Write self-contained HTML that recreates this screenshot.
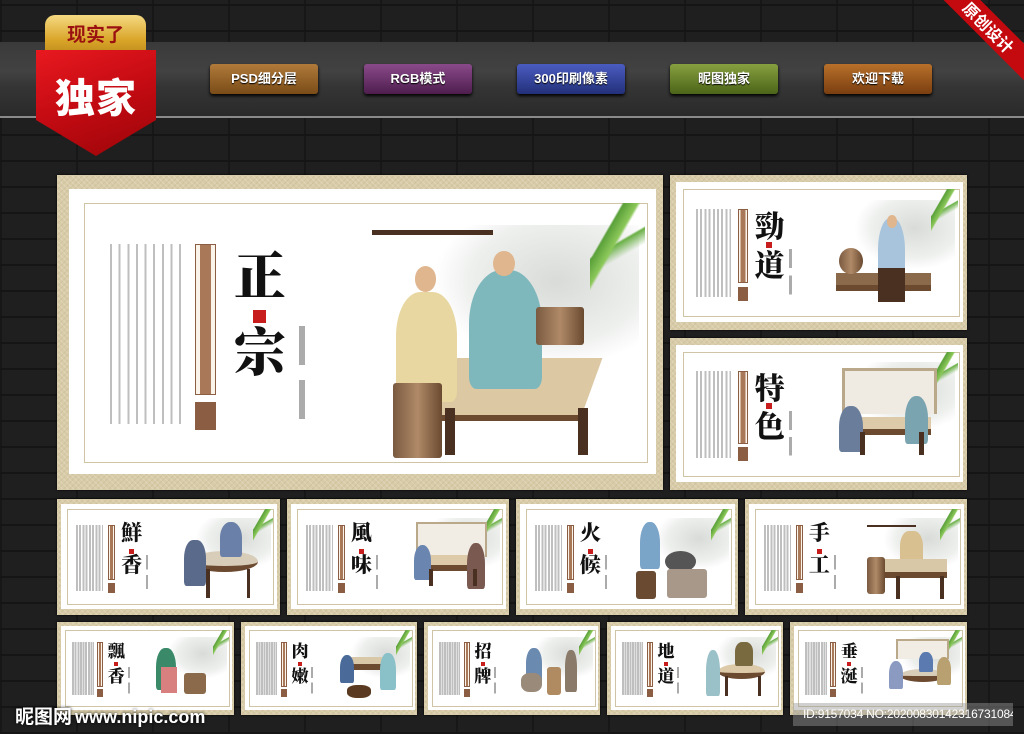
<!DOCTYPE html>
<html><head><meta charset="utf-8">
<style>
*{margin:0;padding:0;box-sizing:border-box}
body{width:1024px;height:734px;overflow:hidden;position:relative;font-family:"Liberation Sans","Noto Sans CJK SC",sans-serif;
background-color:#1f1f1f;
background-image:repeating-linear-gradient(0deg,#151515 0 2px,transparent 2px 26px),repeating-linear-gradient(90deg,#171717 0 2px,transparent 2px 76px);}
.band{position:absolute;left:0;top:42px;width:1024px;height:74px;background:linear-gradient(#3a3a3a,#424242 40%,#353535 60%,#2a2a2a);}
.band:after{content:"";position:absolute;left:0;bottom:-2px;width:100%;height:2px;background:#8a8a8a}
.btn{position:absolute;top:64px;height:30px;width:108px;border-radius:3px;color:#fff;font-weight:bold;font-size:13px;text-align:center;line-height:30px;box-shadow:0 2px 3px #000;text-shadow:0 1px 1px #000}
.gold{position:absolute;left:45px;top:15px;width:101px;height:42px;border-radius:10px 10px 0 0;background:linear-gradient(#f5d982,#d9a528 60%,#b9861a);color:#9a1010;font-weight:bold;font-size:19px;text-align:center;line-height:38px;font-family:"Noto Sans CJK SC",sans-serif}
.red{position:absolute;left:36px;top:50px;width:120px;height:106px;background:linear-gradient(160deg,#e8191f,#c30a12 50%,#9a0509);clip-path:polygon(0 0,100% 0,100% 66%,50% 100%,0 66%)}
.red span{position:absolute;left:0;top:16px;width:100%;text-align:center;color:#fff;font-weight:900;font-size:40px;font-family:"Noto Sans CJK SC",sans-serif;letter-spacing:1px}
.rib{position:absolute;right:-40px;top:14px;width:150px;height:26px;background:#c4090f;transform:rotate(45deg);color:#fff;font-weight:bold;font-size:16px;text-align:center;line-height:26px;font-family:"Noto Sans CJK SC",sans-serif}
.p{position:absolute;background:#d8cca8;background-image:repeating-linear-gradient(45deg,rgba(255,255,255,.18) 0 1px,transparent 1px 4px),repeating-linear-gradient(-45deg,rgba(150,130,90,.15) 0 1px,transparent 1px 4px);box-shadow:0 0 2px #000}
.w{position:absolute;left:2%;top:4.5%;right:1.2%;bottom:5%;background:#fff}
.ln{position:absolute;left:4.5%;top:9%;right:2.5%;bottom:8.5%;border:1px solid #cfc5a6}
.tx{position:absolute;left:8.7%;top:22%;width:12%;height:57%;background:repeating-linear-gradient(90deg,#8a8a8a 0 2px,transparent 2px 12%);opacity:.55}
.lb{position:absolute;left:22.8%;top:22%;width:3.4%;height:48%;border:1px solid #8b5e44;background:linear-gradient(90deg,#faf3ea 20%,#a87858 20% 80%,#faf3ea 80%)}
.lb2{position:absolute;left:22.8%;top:72%;width:3.4%;height:9%;background:#8b5e44}
.t{position:absolute;left:28.5%;width:10%;font-family:"Noto Serif CJK SC",serif;font-weight:900;color:#111;text-align:center;line-height:1}
.st{position:absolute;left:32.3%;top:43%;width:2.2%;height:4%;background:#c71d1d}
.sm{position:absolute;left:40%;top:48%;width:1%;height:31%;background:repeating-linear-gradient(#444 0 40%,transparent 40% 55%);opacity:.45}
.hill{position:absolute;left:62%;top:16%;width:34%;height:45%;background:radial-gradient(ellipse at 60% 40%,#d9dbd8,#eef0ee 50%,transparent 70%)}
.bam{position:absolute;right:3%;top:9%;width:9%;height:28%;background:linear-gradient(120deg,transparent 30%,#5aa03a 32%,#8cc85a 45%,transparent 48%),linear-gradient(150deg,transparent 45%,#6ab046 47%,transparent 60%)}
.tab{position:absolute;left:60%;top:58%;width:28%;height:20%;background:#ddc8a4;border-bottom:6px solid #6b4a30;transform:skewX(-20deg)}
.leg{position:absolute;top:74%;width:1.6%;height:15%;background:#4a3020}
.f1{position:absolute;left:56%;top:37%;width:10%;height:35%;background:#e8d7a0;border-radius:40% 40% 10% 10%}
.f2{position:absolute;left:68%;top:30%;width:12%;height:38%;background:#7fb8bc;border-radius:45% 45% 10% 10%}
.hd{position:absolute;width:3.5%;height:8%;border-radius:50%;background:#e0b68e}
.sv{position:absolute;left:55.5%;top:66%;width:8%;height:24%;background:linear-gradient(90deg,#7a5a40,#b08a68,#6a4a30);border-radius:3px}
.wm{position:absolute;left:15px;top:703px;color:#fff;font-weight:bold;font-size:19px;line-height:26px;text-shadow:0 0 3px #000;font-family:"Noto Sans CJK SC",sans-serif;white-space:nowrap}
.wm b{font-family:"Liberation Sans",sans-serif;font-size:18px;margin-left:3px}
.id{position:absolute;left:793px;top:703px;width:220px;height:23px;background:rgba(150,150,150,.45);color:#fff;font-size:12px;line-height:23px;padding-left:10px;white-space:nowrap;overflow:hidden;letter-spacing:-.2px}
</style></head><body>
<div class="band"></div>
<div class="gold">现实了</div>
<div class="red"><span>独家</span></div>
<div class="rib">原创设计</div>
<div class="btn" style="left:210px;background:linear-gradient(#b07a3a,#7a4c18)">PSD细分层</div>
<div class="btn" style="left:364px;background:linear-gradient(#8a4a8a,#4e1e4e)">RGB模式</div>
<div class="btn" style="left:517px;background:linear-gradient(#4a5cc0,#23307a)">300印刷像素</div>
<div class="btn" style="left:670px;background:linear-gradient(#86a040,#4c6418)">昵图独家</div>
<div class="btn" style="left:824px;background:linear-gradient(#b8702a,#7a3e10)">欢迎下载</div>

<div class="p" style="left:57px;top:175px;width:606px;height:315px">
<div class="w"></div><div class="ln"></div><div class="hill"></div><div class="bam"></div>
<div class="tx"></div><div class="lb"></div><div class="lb2"></div>
<div class="t" style="top:23%;font-size:52px">正</div><div class="st"></div>
<div class="t" style="top:47%;font-size:52px">宗</div><div class="sm"></div>
<div style="position:absolute;left:52%;top:17.5%;width:20%;height:1.5%;background:#4a3020"></div>
<div class="tab"></div><div class="leg" style="left:64%"></div><div class="leg" style="left:86%"></div>
<div class="f1"></div><div class="hd" style="left:59%;top:29%"></div>
<div class="f2"></div><div class="hd" style="left:72%;top:24%"></div>
<div class="sv"></div><div class="sv" style="left:79%;top:42%;height:12%"></div>
</div>

<div class="p" style="left:670px;top:175px;width:297px;height:155px">
<div class="w"></div><div class="ln"></div><div class="hill"></div><div class="bam"></div>
<div class="tx"></div><div class="lb"></div><div class="lb2"></div>
<div class="t" style="top:22%;font-size:30px">勁</div><div class="st"></div><div class="t" style="top:47%;font-size:30px">道</div><div class="sm"></div>
<div class="tab" style="top:63%;left:56%;width:32%;transform:none;height:12%;background:#8a6a4a"></div>
<div class="f2" style="left:70%;top:28%;height:45%;width:9%;background:#a8c4dc"></div><div class="hd" style="left:73%;top:26%"></div>
<div style="position:absolute;left:70%;top:60%;width:9%;height:22%;background:#4a3020"></div>
<div class="sv" style="left:57%;top:47%;width:8%;height:17%;border-radius:50%"></div>
</div>
<div class="p" style="left:670px;top:338px;width:297px;height:152px">
<div class="w"></div><div class="ln"></div><div class="hill"></div><div class="bam"></div>
<div class="tx"></div><div class="lb"></div><div class="lb2"></div>
<div class="t" style="top:22%;font-size:30px">特</div><div class="st"></div><div class="t" style="top:47%;font-size:30px">色</div><div class="sm"></div>
<div style="position:absolute;left:58%;top:20%;width:32%;height:30%;border:3px solid #b9a88a;border-bottom:none;background:#f0ebe2"></div>
<div class="tab" style="top:52%;left:60%;width:28%;transform:none;height:12%;background:#dccaa8"></div>
<div class="f2" style="left:57%;top:45%;height:30%;width:8%;background:#6a7e9c"></div>
<div class="f2" style="left:79%;top:38%;height:32%;width:8%;background:#7aa4b0"></div>
<div class="leg" style="left:64%;top:62%"></div><div class="leg" style="left:84%;top:62%"></div>
</div>

<div class="p" style="left:57px;top:499px;width:223px;height:116px">
<div class="w"></div><div class="ln"></div><div class="hill"></div><div class="bam"></div>
<div class="tx"></div><div class="lb"></div><div class="lb2"></div>
<div class="t" style="top:20%;font-size:21px">鮮</div><div class="st"></div><div class="t" style="top:47%;font-size:21px">香</div><div class="sm"></div>
<div class="tab" style="left:60%;top:45%;width:30%;height:18%;transform:none;background:#d8cdb8;border-radius:50%"></div>
<div class="f1" style="left:57%;top:35%;width:10%;height:40%;background:#5a6a8a"></div>
<div class="f2" style="left:73%;top:20%;width:10%;height:30%;background:#6a80a8"></div>
<div class="leg" style="left:67%;top:60%;height:25%"></div><div class="leg" style="left:85%;top:60%;height:25%"></div>
</div>
<div class="p" style="left:287px;top:499px;width:222px;height:116px">
<div class="w"></div><div class="ln"></div><div class="hill"></div><div class="bam"></div>
<div class="tx"></div><div class="lb"></div><div class="lb2"></div>
<div class="t" style="top:20%;font-size:21px">風</div><div class="st"></div><div class="t" style="top:47%;font-size:21px">味</div><div class="sm"></div>
<div style="position:absolute;left:58%;top:20%;width:32%;height:30%;border:2px solid #b9a88a;border-bottom:none;background:#f2ede4"></div>
<div class="tab" style="top:48%;left:60%;width:28%;transform:none;height:14%;background:#dccaa8"></div>
<div class="f2" style="left:57%;top:40%;height:30%;width:8%;background:#6a86b0"></div>
<div class="f2" style="left:81%;top:38%;height:40%;width:8%;background:#7a5a50"></div>
<div class="leg" style="left:64%;top:60%"></div><div class="leg" style="left:84%;top:60%"></div>
</div>
<div class="p" style="left:516px;top:499px;width:222px;height:116px">
<div class="w"></div><div class="ln"></div><div class="hill"></div><div class="bam"></div>
<div class="tx"></div><div class="lb"></div><div class="lb2"></div>
<div class="t" style="top:20%;font-size:21px">火</div><div class="st"></div><div class="t" style="top:47%;font-size:21px">候</div><div class="sm"></div>
<div class="f2" style="left:56%;top:20%;height:40%;width:9%;background:#7aa4c8"></div>
<div class="sv" style="left:67%;top:45%;width:14%;height:18%;border-radius:50%;background:#555"></div>
<div class="sv" style="left:68%;top:60%;width:18%;height:25%;background:#a8988a"></div>
<div class="sv" style="left:54%;top:62%;width:9%;height:24%;background:#6a4a30"></div>
</div>
<div class="p" style="left:745px;top:499px;width:222px;height:116px">
<div class="w"></div><div class="ln"></div><div class="hill"></div><div class="bam"></div>
<div class="tx"></div><div class="lb"></div><div class="lb2"></div>
<div class="t" style="top:20%;font-size:21px">手</div><div class="st"></div><div class="t" style="top:47%;font-size:21px">工</div><div class="sm"></div>
<div style="position:absolute;left:55%;top:22%;width:22%;height:2%;background:#4a3020"></div>
<div class="f1" style="left:70%;top:28%;height:32%;width:10%;background:#d8c090"></div>
<div class="tab" style="left:63%;top:52%;width:28%;height:16%;transform:none;background:#d8c8a8"></div>
<div class="sv" style="left:55%;top:50%;width:8%;height:32%"></div>
<div class="leg" style="left:68%;top:66%;height:20%"></div><div class="leg" style="left:88%;top:66%;height:20%"></div>
</div>

<div class="p" style="left:57px;top:622px;width:177px;height:93px">
<div class="w"></div><div class="ln"></div><div class="hill"></div><div class="bam"></div>
<div class="tx"></div><div class="lb"></div><div class="lb2"></div>
<div class="t" style="top:20%;font-size:17px">飄</div><div class="st"></div><div class="t" style="top:47%;font-size:17px">香</div><div class="sm"></div>
<div class="f2" style="left:56%;top:28%;height:45%;width:11%;background:#3a8a6a"></div>
<div style="position:absolute;left:59%;top:48%;width:9%;height:28%;background:#d88080"></div>
<div class="sv" style="left:72%;top:55%;width:12%;height:22%;background:#8a6a4a"></div>
</div>
<div class="p" style="left:241px;top:622px;width:176px;height:93px">
<div class="w"></div><div class="ln"></div><div class="hill"></div><div class="bam"></div>
<div class="tx"></div><div class="lb"></div><div class="lb2"></div>
<div class="t" style="top:20%;font-size:17px">肉</div><div class="st"></div><div class="t" style="top:47%;font-size:17px">嫩</div><div class="sm"></div>
<div class="tab" style="left:62%;top:38%;width:18%;height:14%;transform:none;background:#d8c8a8"></div>
<div class="f2" style="left:56%;top:36%;height:30%;width:8%;background:#4a6a9a"></div>
<div class="f2" style="left:79%;top:33%;height:40%;width:9%;background:#8ac0c8"></div>
<div class="sv" style="left:60%;top:68%;width:14%;height:14%;background:#5a3a20;border-radius:40%"></div>
</div>
<div class="p" style="left:424px;top:622px;width:176px;height:93px">
<div class="w"></div><div class="ln"></div><div class="hill"></div><div class="bam"></div>
<div class="tx"></div><div class="lb"></div><div class="lb2"></div>
<div class="t" style="top:20%;font-size:17px">招</div><div class="st"></div><div class="t" style="top:47%;font-size:17px">牌</div><div class="sm"></div>
<div class="f2" style="left:58%;top:28%;height:36%;width:9%;background:#6a8ab0"></div>
<div class="sv" style="left:55%;top:55%;width:12%;height:20%;background:#9a8a7a;border-radius:40%"></div>
<div class="sv" style="left:70%;top:48%;width:8%;height:30%;background:#b08a60"></div>
<div class="f1" style="left:80%;top:30%;height:45%;width:7%;background:#8a7a6a"></div>
</div>
<div class="p" style="left:607px;top:622px;width:176px;height:93px">
<div class="w"></div><div class="ln"></div><div class="hill"></div><div class="bam"></div>
<div class="tx"></div><div class="lb"></div><div class="lb2"></div>
<div class="t" style="top:20%;font-size:17px">地</div><div class="st"></div><div class="t" style="top:47%;font-size:17px">道</div><div class="sm"></div>
<div class="tab" style="left:63%;top:45%;width:27%;height:16%;transform:none;background:#dccaa8;border-radius:50%"></div>
<div class="f2" style="left:56%;top:30%;height:50%;width:8%;background:#9ac0c8"></div>
<div class="f1" style="left:73%;top:22%;height:25%;width:10%;background:#7a6a40"></div>
<div class="leg" style="left:67%;top:58%;height:22%"></div><div class="leg" style="left:86%;top:58%;height:22%"></div>
</div>
<div class="p" style="left:790px;top:622px;width:177px;height:93px">
<div class="w"></div><div class="ln"></div><div class="hill"></div><div class="bam"></div>
<div class="tx"></div><div class="lb"></div><div class="lb2"></div>
<div class="t" style="top:20%;font-size:17px">垂</div><div class="st"></div><div class="t" style="top:47%;font-size:17px">涎</div><div class="sm"></div>
<div style="position:absolute;left:60%;top:18%;width:30%;height:22%;border:2px solid #b9a88a;border-bottom:none;background:#f2ede4"></div>
<div class="tab" style="left:62%;top:50%;width:26%;height:14%;transform:none;background:#d8cdb8;border-radius:50%"></div>
<div class="f2" style="left:56%;top:42%;height:30%;width:8%;background:#8a9ac0"></div>
<div class="f2" style="left:73%;top:32%;height:22%;width:8%;background:#5a7ab0"></div>
<div class="f2" style="left:83%;top:38%;height:30%;width:8%;background:#b8a070"></div>
</div>

<div class="wm">昵图网<b>www.nipic.com</b></div>
<div class="id">ID:9157034 NO:20200830142316731084</div>
</body></html>
